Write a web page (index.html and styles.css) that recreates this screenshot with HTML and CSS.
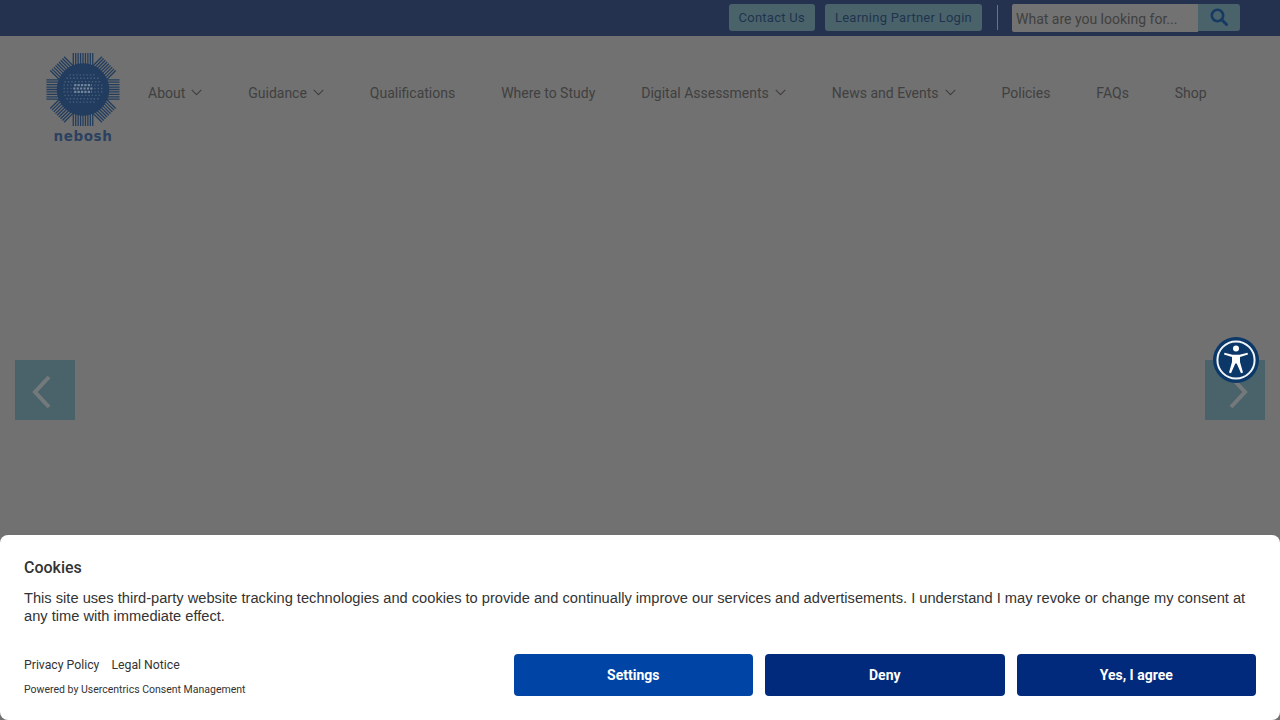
FILE: index.html
```html
<!DOCTYPE html>
<html lang="en">
<head>
<meta charset="utf-8">
<title>NEBOSH</title>
<link rel="stylesheet" href="styles.css">
</head>
<body>
<header class="topbar">
  <a class="top-btn" href="#">Contact Us</a>
  <a class="top-btn" href="#">Learning Partner Login</a>
  <span class="divider"></span>
  <form class="search">
    <span class="search-input">What are you looking for...</span>
    <span class="search-btn">
      <svg width="18" height="18" viewBox="0 0 18 18"><circle cx="7.5" cy="7.5" r="5.7" fill="none" stroke="#173a63" stroke-width="2.6"/><path d="M11.8 11.8L16.5 16.5" stroke="#173a63" stroke-width="3" stroke-linecap="round"/></svg>
    </span>
  </form>
</header>
<nav class="nav">
  <a class="logo" href="#">
    <svg class="logo-mark" width="74" height="75" viewBox="-38 -38 76 76">
      <defs>
        <path id="rays" d="M-10-37.5V37.5M-7.5-37.5V37.5M-5-37.5V37.5M-2.5-37.5V37.5M0-37.5V37.5M2.5-37.5V37.5M5-37.5V37.5M7.5-37.5V37.5M10-37.5V37.5" stroke="#213c5e" stroke-width="1.3" fill="none"/>
      </defs>
      <use href="#rays"/>
      <use href="#rays" transform="rotate(45)"/>
      <use href="#rays" transform="rotate(90)"/>
      <use href="#rays" transform="rotate(135)"/>
      <circle r="27" fill="#213c5e"/>
      <g fill="none">
        <path d="M-14-15H14M-17-11.5H17M-19-8H19M-20-4.5H20M-20-1H20M-20 2.5H20M-19 6H19M-17 9.5H17M-14 13H14" stroke="#48607d" stroke-width="1.4" stroke-dasharray="1.4 2.1"/>
        <path d="M-9-4.5H9M-10-1H10M-9 2.5H9" stroke="#76869b" stroke-width="2.2" stroke-dasharray="2.2 1.3"/>
      </g>
    </svg>
    <span class="logo-text">nebosh</span>
  </a>
  <ul class="menu">
    <li class="item">About <svg class="chev" width="11" height="7" viewBox="0 0 11 7"><path d="M.7.8L5.5 5.6 10.3.8" fill="none" stroke="#404040" stroke-width="1.1"/></svg></li>
    <li class="item">Guidance <svg class="chev" width="11" height="7" viewBox="0 0 11 7"><path d="M.7.8L5.5 5.6 10.3.8" fill="none" stroke="#404040" stroke-width="1.1"/></svg></li>
    <li class="item">Qualifications</li>
    <li class="item">Where to Study</li>
    <li class="item">Digital Assessments <svg class="chev" width="11" height="7" viewBox="0 0 11 7"><path d="M.7.8L5.5 5.6 10.3.8" fill="none" stroke="#404040" stroke-width="1.1"/></svg></li>
    <li class="item">News and Events <svg class="chev" width="11" height="7" viewBox="0 0 11 7"><path d="M.7.8L5.5 5.6 10.3.8" fill="none" stroke="#404040" stroke-width="1.1"/></svg></li>
    <li class="item">Policies</li>
    <li class="item">FAQs</li>
    <li class="item">Shop</li>
  </ul>
</nav>
<a class="arrow arrow-prev" href="#"><svg width="24" height="36" viewBox="0 0 24 36"><path d="M19 3L5 18 19 33" fill="none" stroke="#74797b" stroke-width="4"/></svg></a>
<a class="arrow arrow-next" href="#"><svg width="24" height="36" viewBox="0 0 24 36"><path d="M5 3L19 18 5 33" fill="none" stroke="#74797b" stroke-width="4"/></svg></a>
<button class="a11y" type="button" aria-label="Accessibility">
  <svg width="40" height="40" viewBox="0 0 40 40">
    <circle cx="20" cy="20" r="18.6" fill="none" stroke="#f2f5f8" stroke-width="2"/>
    <circle cx="20" cy="8.6" r="3" fill="#fff"/>
    <path d="M8.5 12.8L16.5 14.8H23.5L31.5 12.8L32 14.6L24 17V22L27 32.4L25 33.2L20.7 23.6H19.3L15 33.2L13 32.4L16 22V17L8 14.6Z" fill="#fff"/>
  </svg>
</button>
<section class="cookie">
  <h2 class="cookie-title">Cookies</h2>
  <p class="cookie-text">This site uses third-party website tracking technologies and cookies to provide and continually improve our services and advertisements. I understand I may revoke or change my consent at any time with immediate effect.</p>
  <div class="cookie-foot">
    <div class="cookie-legal">
      <div class="legal-links"><a href="#">Privacy Policy</a><a href="#">Legal Notice</a></div>
      <div class="powered">Powered by Usercentrics Consent Management</div>
    </div>
    <div class="cookie-actions">
      <button class="cbtn cbtn-light" type="button">Settings</button>
      <button class="cbtn" type="button">Deny</button>
      <button class="cbtn" type="button">Yes, I agree</button>
    </div>
  </div>
</section>
</body>
</html>
```
FILE: styles.css
```css
* { box-sizing: border-box; }
html, body { margin: 0; height: 720px; overflow: hidden; }
body { background: #717171; font-family: Roboto, sans-serif; position: relative; }
a { text-decoration: none; color: inherit; }

.topbar {
  height: 36px;
  background: #25324f;
  display: flex;
  justify-content: flex-end;
  align-items: flex-start;
  padding: 4px 40px 0 0;
}
.top-btn {
  height: 27px;
  line-height: 27px;
  padding: 0 10px;
  margin-right: 10px;
  background: #4a636b;
  border-radius: 3px;
  color: #1f334d;
  font-size: 13px;
  letter-spacing: .26px;
}
.top-btn + .top-btn { margin-right: 15px; }
.divider { width: 1px; height: 25px; margin: 1px 14px 0 0; background: #6a7380; }
.search { display: flex; }
.search-input {
  width: 186px;
  height: 28px;
  background: #727272;
  border-radius: 2px 0 0 2px;
  padding: 0 4px;
  font-size: 14px;
  line-height: 30px;
  color: #404040;
  white-space: nowrap;
}
.search-btn {
  width: 42px;
  height: 27px;
  background: #4a636b;
  border-radius: 0 3px 3px 0;
  display: flex;
  align-items: center;
  justify-content: center;
  padding-bottom: 2px;
}

.nav {
  display: flex;
  align-items: flex-start;
  padding: 16px 0 0 46px;
}
.logo { display: flex; flex-direction: column; align-items: center; width: 74px; }
.logo-mark { display: block; }
.logo-text {
  font-family: "DejaVu Sans", sans-serif;
  font-weight: 700;
  font-size: 13.5px;
  line-height: 14px;
  margin-top: 2px;
  letter-spacing: .6px;
  color: #2b4160;
}
.menu {
  display: flex;
  gap: 45.95px;
  list-style: none;
  margin: 0;
  padding: 33px 0 0 28px;
  color: #404040;
  font-size: 14px;
  line-height: 17px;
}
.item { display: flex; align-items: center; gap: 6px; white-space: nowrap; }
.chev { display: block; margin-top: -2px; }

.arrow {
  position: absolute;
  top: 360px;
  width: 60px;
  height: 60px;
  background: #4a636b;
  display: flex;
  align-items: center;
  justify-content: center;
}
.arrow svg { margin-top: 4px; }
.arrow-prev { left: 15px; }
.arrow-prev svg { margin-right: 6px; }
.arrow-next { left: 1205px; }
.arrow-next svg { margin-left: 6px; }

.a11y {
  position: absolute;
  left: 1213px;
  top: 337px;
  width: 46px;
  height: 46px;
  padding: 0;
  border: 0;
  border-radius: 50%;
  background: #0b3868;
  display: flex;
  align-items: center;
  justify-content: center;
}

.cookie {
  position: absolute;
  left: 0;
  right: 0;
  bottom: 0;
  height: 185px;
  background: #fff;
  border-radius: 8px;
  padding: 23px 24px 0;
  color: #333;
}
.cookie-title {
  margin: 0;
  font-size: 16px;
  font-weight: 500;
  line-height: 19px;
}
.cookie-text {
  margin: 12px 0 0;
  font-family: "Liberation Sans", Arial, sans-serif;
  font-size: 14.66px;
  line-height: 18px;
}
.cookie-foot {
  display: flex;
  justify-content: space-between;
  margin-top: 29px;
}
.legal-links { display: flex; gap: 12px; font-size: 12.25px; line-height: 14px; margin-top: 4px; }
.powered { font-size: 10.5px; line-height: 12px; margin-top: 12px; }
.cookie-actions { display: flex; gap: 12px; }
.cbtn {
  width: 239.5px;
  height: 42px;
  border: 0;
  border-radius: 4px;
  background: #012a7c;
  color: #fff;
  font-family: Roboto, sans-serif;
  font-size: 14px;
  font-weight: 700;
}
.cbtn-light { background: #0045a5; }
```
